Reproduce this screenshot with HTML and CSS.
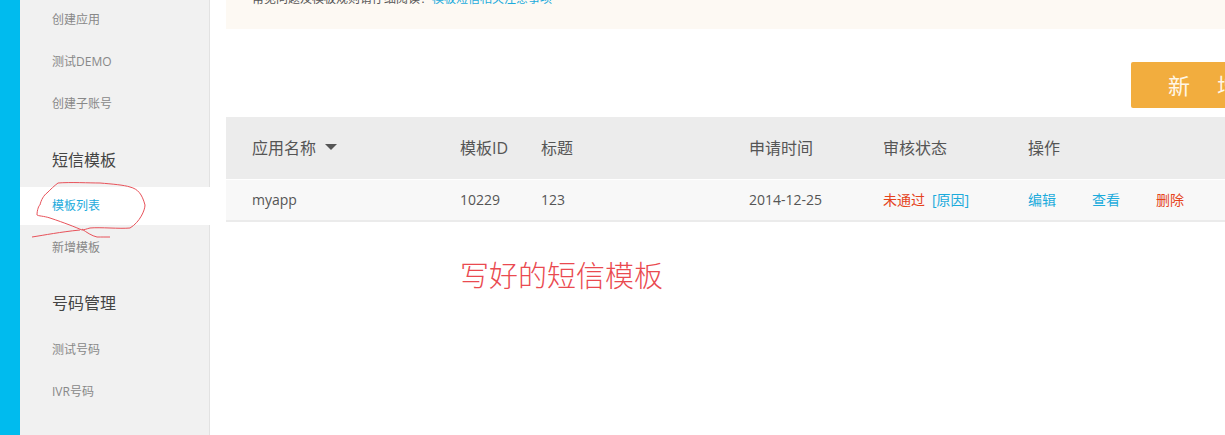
FILE: index.html
```html
<!DOCTYPE html>
<html lang="zh">
<head>
<meta charset="utf-8">
<title>短信模板</title>
<link rel="stylesheet" href="styles.css">
</head>
<body>
<div class="page">
  <div class="rail"></div>
  <nav class="sidebar">
    <a class="item">创建应用</a>
    <a class="item">测试DEMO</a>
    <a class="item">创建子账号</a>
    <h3 class="heading first">短信模板</h3>
    <a class="item active">模板列表</a>
    <a class="item after-active">新增模板</a>
    <h3 class="heading second">号码管理</h3>
    <a class="item">测试号码</a>
    <a class="item">IVR号码</a>
  </nav>
  <main class="main">
    <div class="notice">常见问题及模板规则请仔细阅读！<a class="notice-link">模板短信相关注意事项</a></div>
    <div class="toolbar"><button class="add-btn">新　增</button></div>
    <div class="row head">
      <div class="cell sort">应用名称<span class="caret"></span></div>
      <div class="cell">模板ID</div>
      <div class="cell">标题</div>
      <div class="cell">申请时间</div>
      <div class="cell">审核状态</div>
      <div class="cell">操作</div>
    </div>
    <div class="row body">
      <div class="cell">myapp</div>
      <div class="cell">10229</div>
      <div class="cell">123</div>
      <div class="cell">2014-12-25</div>
      <div class="cell status"><span class="red">未通过</span><a class="blue">[原因]</a></div>
      <div class="cell ops"><a class="blue">编辑</a><a class="blue">查看</a><a class="red">删除</a></div>
    </div>
  </main>
  <div class="annotation">写好的短信模板</div>
  <svg class="scribble" width="160" height="70" viewBox="0 0 160 70" fill="none" stroke="#e8525a" stroke-width="1">
    <path d="M38 3 C50 2 70 3 80 3 C92 4 104 5 110 7 C118 9 122 14 125 25 C125 30 120 42 110 48 C100 49 80 47 70 48 C66 49 64 50 62 50 C55 47 45 43 30 38 C24 36 18 36 17 35 C17 30 19 25 20 25 C21 20 24 15 27 13 C31 9 34 6 38 3 Z"/>
    <path d="M12 57 C25 55 40 52 60 50"/>
    <path d="M62 49 C66 52 72 56 77 57 C82 57 86 57 90 57"/>
  </svg>
</div>
</body>
</html>
```

FILE: styles.css
```css
* { box-sizing: border-box; }

html, body {
  margin: 0;
  padding: 0;
  background: #fff;
}

body {
  font-family: "Open Sans", "Noto Sans CJK SC", sans-serif;
  overflow: hidden;
}

.page {
  position: relative;
  display: flex;
  width: 1225px;
  height: 435px;
  overflow: hidden;
}

.rail {
  flex: 0 0 20px;
  background: #00bbee;
}

.sidebar {
  flex: 0 0 190px;
  background: #f1f1f1;
  border-right: 1px solid #e2e2e2;
  margin-top: -1px;
  height: 436px;
}

.item {
  display: block;
  height: 42px;
  line-height: 42px;
  padding-left: 32px;
  font-size: 12px;
  color: #888;
}

.item.active {
  height: 38px;
  line-height: 37px;
  background: #fff;
  color: #1cabdc;
  margin-right: -1px;
}

.item.after-active { margin-top: 2px; }

.heading {
  height: 42px;
  line-height: 42px;
  margin: 0;
  padding-left: 32px;
  font-size: 16px;
  font-weight: 400;
  color: #444;
}

.heading.first { margin-top: 14px; margin-bottom: 6px; }
.heading.second { margin-top: 13px; margin-bottom: 5px; }

.main {
  flex: 1;
  min-width: 0;
  margin-left: 16px;
}

.notice {
  height: 43px;
  margin-top: -14px;
  padding: 4px 0 0 26px;
  background: #fdf9f3;
  font-size: 12px;
  line-height: 17px;
  color: #555;
}

.notice-link { color: #1cabdc; }

.toolbar {
  display: flex;
  height: 88px;
  padding: 33px 0 9px 905px;
}

.add-btn {
  flex: 0 0 150px;
  height: 46px;
  border: 0;
  border-radius: 2px;
  background: #f2ad3e;
  color: #fff6e6;
  font-family: inherit;
  font-size: 22px;
  letter-spacing: 2.5px;
  line-height: 46px;
  padding: 0 0 0 37px;
  text-align: left;
}

.row {
  display: grid;
  grid-template-columns: 208px 81px 208px 134px 145px 1fr;
  align-items: center;
  padding-left: 26px;
}

.head {
  height: 62px;
  padding-bottom: 2px;
  background: #ececec;
  font-size: 16px;
  color: #555;
}

.body {
  height: 42px;
  margin-top: 1px;
  padding-bottom: 1px;
  background: #f8f8f8;
  border-bottom: 2px solid #ebebeb;
  font-size: 14px;
  color: #555;
}

.cell { white-space: nowrap; }

.sort { display: flex; align-items: center; }

.caret {
  width: 0;
  height: 0;
  margin-left: 9px;
  border-left: 6px solid transparent;
  border-right: 6px solid transparent;
  border-top: 6px solid #555;
}

.status { display: flex; gap: 7px; margin-bottom: 2px; }

.ops { display: flex; margin-bottom: 2px; }
.ops a { flex: 0 0 64px; }

.red { color: #e5431c; }
.blue { color: #1cabdc; }

.annotation {
  position: absolute;
  left: 460px;
  top: 255px;
  font-size: 29px;
  line-height: 42px;
  font-weight: 300;
  color: #ea4a50;
  white-space: nowrap;
}

.scribble {
  position: absolute;
  left: 20px;
  top: 180px;
}
```
